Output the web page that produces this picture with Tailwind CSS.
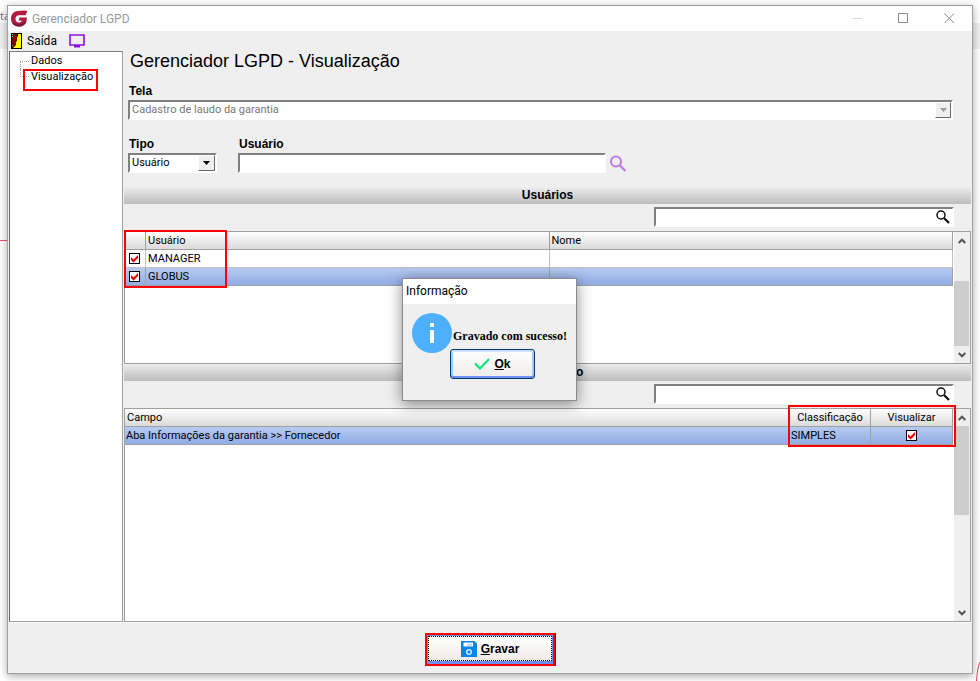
<!DOCTYPE html>
<html lang="pt-BR">
<head>
  <meta charset="UTF-8" />
  <meta name="viewport" content="width=device-width, initial-scale=1.0"/>
  <title>Gerenciador LGPD</title>
  <script src="https://cdn.jsdelivr.net/npm/@tailwindcss/browser@4"></script>
</head>
<body class="relative h-screen min-h-[500px] overflow-hidden bg-white px-[7px] pt-[5px] pb-[7px] font-[Roboto,sans-serif] text-[11px] leading-4 text-black">

  <!-- Page behind the window -->
  <div class="absolute inset-x-0 top-[23px] h-[26px] bg-[#f0f0f0]"></div>
  <span class="absolute top-2 left-0 font-['Open_Sans',sans-serif] text-[11px] text-[#5a6b85]">ta</span>
  <div class="absolute top-[240px] left-0 h-px w-2 bg-[#f0506a]"></div>
  <svg class="absolute right-0 bottom-0 h-5 w-1" viewBox="0 0 4 20" fill="none" stroke="#f0405a"><path d="M4 1Q1 8 0.5 20"/></svg>

  <!-- Window -->
  <div class="relative flex h-full flex-col border border-[#a0a0a0] bg-[#efefef] shadow-[0_2px_8px_rgba(0,0,0,0.35)]">

    <!-- Title bar -->
    <header class="flex h-[25px] shrink-0 items-center bg-white pl-[3px] text-[12px] text-[#999999]">
      <svg class="mr-1 size-[17px]" viewBox="0 0 17 17">
        <path d="M13.5 0.5L6.500 1C2.500 1.500 0 4.600 0 8.600C0 13.500 3.600 16.500 8 16.500C12.500 16.500 15.500 14 16 7.500H8.500L7.500 10.500H10.800C10.300 12 9.300 12.600 8 12.600C5.800 12.600 4.500 11 4.500 8.800C4.500 6.500 6 5.200 8.200 5.200H14.500L16.500 1Z" fill="#b01c43"/>
        <path d="M0.500 11C1.500 14.800 4.500 16.500 8 16.500C12 16.500 14.800 14.500 15.700 10.500C12 15 5 15.500 0.500 11Z" fill="#7d1733"/>
      </svg>
      <h1>Gerenciador LGPD</h1>
      <div class="ml-auto flex h-full">
        <button type="button" aria-label="Minimizar" class="grid w-[46px] place-items-center"><svg class="size-[11px]" viewBox="0 0 11 11" stroke="#dddddd"><path d="M0 5.5H10"/></svg></button>
        <button type="button" aria-label="Maximizar" class="grid w-[46px] place-items-center"><svg class="size-[11px]" viewBox="0 0 11 11" fill="none" stroke="#8a8a8a"><path d="M0.500 0.500H9.500V9.500H0.500Z"/></svg></button>
        <button type="button" aria-label="Fechar" class="grid w-[46px] place-items-center"><svg class="size-[11px]" viewBox="0 0 11 11" stroke="#8a8a8a"><path d="M0.500 0.500L10 10M10 0.500L0.500 10"/></svg></button>
      </div>
    </header>

    <!-- Toolbar -->
    <div class="flex h-5 shrink-0 items-center gap-3 pl-[3px] text-[12px]">
      <button type="button" class="flex items-center gap-[5px]">
        <svg class="h-4 w-[11px]" viewBox="0 0 11 16">
          <path d="M0 0H11V16H0Z" fill="#000"/>
          <path d="M1 1H6V12L1 15Z" fill="#800000"/>
          <path d="M7 1H10V15H2L5 12V9L6 8V4L7 3Z" fill="#ffff00"/>
          <path d="M1 1H2V2H1ZM1 3H2V4H1ZM1 12H2V13H1Z" fill="#00d8e8"/>
        </svg>
        Saída
      </button>
      <button type="button" aria-label="Monitor">
        <svg class="block h-[14px] w-4" viewBox="0 0 16 14"><path d="M1 1H15V11H1Z" fill="none" stroke="#8a10e8" stroke-width="1.600"/><path d="M5 11H11V13.500H5Z" fill="#8a10e8"/></svg>
      </button>
    </div>

    <div class="flex min-h-0 flex-1 pr-px pl-px">
      <!-- Side tree -->
      <nav class="mr-px w-[114px] shrink-0 border border-t-[#808080] border-r-[#a0a0a0] border-b-[#a0a0a0] border-l-[#696969] bg-white pt-px">
        <ul class="ml-[10px]">
          <li class="flex items-center gap-0.5"><span class="mt-2 h-2 w-[9px] border-t border-l border-dotted border-[#a0a0a0]"></span><a href="#">Dados</a></li>
          <li class="relative flex items-center gap-0.5"><span class="mb-2 h-2 w-[9px] border-b border-l border-dotted border-[#a0a0a0]"></span><a href="#">Visualização</a>
            <span class="pointer-events-none absolute top-0 left-[3px] h-[22px] w-[75px] border-2 border-[#ff0000]"></span>
          </li>
        </ul>
      </nav>

      <main class="flex min-w-0 flex-1 flex-col">
        <h2 class="pl-[6px] font-['Liberation_Sans',sans-serif] text-[18px] leading-5">Gerenciador LGPD - Visualização</h2>

        <!-- Filters -->
        <form class="mt-3 pr-[18px] pl-1">
          <label for="tela" class="block h-[17px] pl-px font-['Liberation_Sans',sans-serif] text-[12px] font-bold">Tela</label>
          <div class="relative">
            <select id="tela" disabled class="block h-5 w-full appearance-none border-2 border-t-[#808080] border-r-white border-b-white border-l-[#808080] bg-white px-0.5 text-[#787878] opacity-100">
              <option>Cadastro de laudo da garantia</option>
            </select>
            <span class="pointer-events-none absolute top-0.5 right-0.5 grid h-4 w-4 place-items-center border border-t-white border-r-[#696969] border-b-[#696969] border-l-white bg-[#efefef]"><svg class="h-1 w-[7px]" viewBox="0 0 7 4"><path d="M0 0H7L3.500 4Z" fill="#9a9a9a"/></svg></span>
          </div>
          <div class="mt-4 flex gap-[21px]">
            <div class="w-[89px]">
              <label for="tipo" class="block h-[17px] pl-px font-['Liberation_Sans',sans-serif] text-[12px] font-bold">Tipo</label>
              <div class="relative">
                <select id="tipo" class="block h-5 w-full appearance-none border-2 border-t-[#808080] border-r-white border-b-white border-l-[#808080] bg-white px-0.5">
                  <option>Usuário</option>
                  <option>Grupo</option>
                </select>
                <span class="pointer-events-none absolute top-0.5 right-0.5 grid h-4 w-[17px] place-items-center border border-t-white border-r-[#696969] border-b-[#696969] border-l-white bg-[#efefef]"><svg class="h-1 w-[7px]" viewBox="0 0 7 4"><path d="M0 0H7L3.500 4Z"/></svg></span>
              </div>
            </div>
            <div>
              <label for="usuario" class="block h-[17px] pl-px font-['Liberation_Sans',sans-serif] text-[12px] font-bold">Usuário</label>
              <div class="flex items-center gap-1">
                <input id="usuario" type="text" class="h-5 w-[368px] border-2 border-t-[#808080] border-r-white border-b-white border-l-[#808080] bg-white px-0.5" />
                <button type="button" aria-label="Procurar usuário"><svg class="block size-[17px]" viewBox="0 0 17 17" fill="none" stroke="#c078e8" stroke-width="2"><circle cx="6" cy="6.500" r="5"/><path d="M9.500 10L15.500 16" stroke-width="2.200"/></svg></button>
              </div>
            </div>
          </div>
        </form>

        <!-- Users -->
        <h3 class="mt-[14px] h-[17px] shrink-0 bg-linear-to-b from-[#ececec] to-[#bdbdbd] text-center font-['Liberation_Sans',sans-serif] text-[12px] leading-[17px] font-bold">Usuários</h3>
        <div class="flex h-[27px] shrink-0 justify-end pt-[3px] pr-[17px]">
          <div class="relative">
            <input type="text" aria-label="Buscar em usuários" class="block h-5 w-[300px] border-2 border-t-[#808080] border-r-white border-b-white border-l-[#808080] bg-white pr-6 pl-0.5" />
            <svg class="absolute top-[3px] right-1 size-[14px]" viewBox="0 0 14 14" fill="none" stroke="#111"><circle cx="5" cy="5" r="4" stroke-width="1.500"/><path d="M8 8L13 13" stroke-width="2.200"/></svg>
          </div>
        </div>
        <section class="relative flex h-[133px] shrink-0 border border-[#a0a0a0] bg-white">
          <div class="min-w-0 flex-1">
            <table class="w-full table-fixed border-separate border-spacing-0">
              <colgroup><col class="w-[21px]" /><col /><col /></colgroup>
              <thead>
                <tr class="h-[18px] bg-linear-to-b from-white to-[#d8d8d8] text-left">
                  <th class="border-r border-b border-[#a0a0a0]" aria-label="Selecionar"></th>
                  <th class="border-r border-b border-[#a0a0a0] pl-0.5 font-normal">Usuário</th>
                  <th class="border-r border-b border-[#a0a0a0] pl-0.5 font-normal">Nome</th>
                </tr>
              </thead>
              <tbody>
                <tr class="h-[18px]">
                  <td class="border-r border-b border-[#c0c0c0]">
                    <label class="relative ml-1 block size-[11px]"><input type="checkbox" checked aria-label="MANAGER" class="block size-[11px] appearance-none border border-black bg-white" /><svg class="pointer-events-none absolute top-0 left-0 size-[11px]" viewBox="0 0 11 11"><path d="M2 4L4.500 6.500L9 2V5L4.500 9.500L2 7Z" fill="#ee0000"/></svg></label>
                  </td>
                  <td class="border-r border-b border-[#c0c0c0] pl-0.5">MANAGER</td>
                  <td class="border-r border-b border-[#c0c0c0]"></td>
                </tr>
                <tr class="h-[18px] bg-linear-to-b from-[#b6cbf0] to-[#8faae6]">
                  <td class="border-r border-b border-[#a0a0a0]">
                    <label class="relative ml-1 block size-[11px]"><input type="checkbox" checked aria-label="GLOBUS" class="block size-[11px] appearance-none border border-black bg-white" /><svg class="pointer-events-none absolute top-0 left-0 size-[11px]" viewBox="0 0 11 11"><path d="M2 4L4.500 6.500L9 2V5L4.500 9.500L2 7Z" fill="#ee0000"/></svg></label>
                  </td>
                  <td class="border-r border-b border-[#a0a0a0] pl-0.5">GLOBUS</td>
                  <td class="border-r border-b border-[#a0a0a0]"></td>
                </tr>
              </tbody>
            </table>
          </div>
          <div class="ml-px flex w-4 shrink-0 flex-col bg-[#efefef]">
            <div class="grid h-[18px] shrink-0 place-items-center"><svg class="h-[6px] w-2" viewBox="0 0 8 6" fill="none" stroke="#555" stroke-width="2"><path d="M0.700 5L4 1.700L7.300 5"/></svg></div>
            <div class="mt-auto mr-px h-[65px] bg-[#cdcdcd]"></div>
            <div class="grid h-[17px] shrink-0 place-items-center"><svg class="h-[6px] w-2" viewBox="0 0 8 6" fill="none" stroke="#555" stroke-width="2"><path d="M0.700 1L4 4.300L7.300 1"/></svg></div>
          </div>
          <div class="pointer-events-none absolute -top-0.5 -left-px h-[58px] w-[103px] border-2 border-[#ff0000]"></div>
        </section>

        <!-- Fields -->
        <h3 class="h-[17px] shrink-0 bg-linear-to-b from-[#ececec] to-[#bdbdbd] text-center font-['Liberation_Sans',sans-serif] text-[12px] leading-[17px] font-bold">Visualização</h3>
        <div class="flex h-[27px] shrink-0 justify-end pt-[3px] pr-[17px]">
          <div class="relative">
            <input type="text" aria-label="Buscar em campos" class="block h-5 w-[300px] border-2 border-t-[#808080] border-r-white border-b-white border-l-[#808080] bg-white pr-6 pl-0.5" />
            <svg class="absolute top-[3px] right-1 size-[14px]" viewBox="0 0 14 14" fill="none" stroke="#111"><circle cx="5" cy="5" r="4" stroke-width="1.500"/><path d="M8 8L13 13" stroke-width="2.200"/></svg>
          </div>
        </div>
        <section class="relative flex min-h-0 flex-1 border border-[#a0a0a0] bg-white">
          <div class="min-w-0 flex-1">
            <table class="w-full table-fixed border-separate border-spacing-0">
              <colgroup><col /><col class="w-[81px]" /><col class="w-[82px]" /></colgroup>
              <thead>
                <tr class="h-[18px] bg-linear-to-b from-white to-[#d8d8d8]">
                  <th class="border-r border-b border-[#a0a0a0] pl-0.5 text-left font-normal">Campo</th>
                  <th class="border-r border-b border-[#a0a0a0] font-normal">Classificação</th>
                  <th class="border-r border-b border-[#a0a0a0] font-normal">Visualizar</th>
                </tr>
              </thead>
              <tbody>
                <tr class="h-[18px] bg-linear-to-b from-[#b6cbf0] to-[#8faae6]">
                  <td class="border-r border-b border-[#a0a0a0] pl-px">Aba Informações da garantia &gt;&gt; Fornecedor</td>
                  <td class="border-r border-b border-[#a0a0a0] pl-px">SIMPLES</td>
                  <td class="border-r border-b border-[#a0a0a0]">
                    <label class="relative mx-auto block size-[11px]"><input type="checkbox" checked aria-label="Visualizar Fornecedor" class="block size-[11px] appearance-none border border-black bg-white" /><svg class="pointer-events-none absolute top-0 left-0 size-[11px]" viewBox="0 0 11 11"><path d="M2 4L4.500 6.500L9 2V5L4.500 9.500L2 7Z" fill="#ee0000"/></svg></label>
                  </td>
                </tr>
              </tbody>
            </table>
          </div>
          <div class="ml-px flex w-4 shrink-0 flex-col bg-[#efefef]">
            <div class="grid h-[17px] shrink-0 place-items-center"><svg class="h-[6px] w-2" viewBox="0 0 8 6" fill="none" stroke="#555" stroke-width="2"><path d="M0.700 5L4 1.700L7.300 5"/></svg></div>
            <div class="mr-px h-[89px] bg-[#cdcdcd]"></div>
            <div class="mt-auto grid h-[17px] shrink-0 place-items-center"><svg class="h-[6px] w-2" viewBox="0 0 8 6" fill="none" stroke="#555" stroke-width="2"><path d="M0.700 1L4 4.300L7.300 1"/></svg></div>
          </div>
          <div class="pointer-events-none absolute -top-1 right-[14px] h-[42px] w-[168px] border-2 border-[#ff0000]"></div>
        </section>
      </main>
    </div>

    <!-- Footer -->
    <footer class="flex h-[51px] shrink-0 justify-center border-t border-white pt-[10px]">
      <button type="button" class="h-[33px] w-[130px] border-2 border-[#ff0000] bg-[#6f8cf0] px-px pt-px pb-[3px] font-['Liberation_Sans',sans-serif] text-[12px] font-bold shadow-[1px_0_0_#003c74]">
        <span class="flex h-full items-center justify-center gap-1 border border-dotted border-black bg-linear-to-b from-white to-[#efece8]">
          <svg class="size-4" viewBox="0 0 16 16"><path d="M0 0H13.500L16 2.500V16H0Z" fill="#0a84e8"/><path d="M2.500 1.500H12V5.500H2.500Z" fill="#fff"/><path d="M6 2.500H11V5H6Z" fill="#b8dcfa"/><circle cx="8" cy="11" r="2.300" fill="none" stroke="#cfe8ff" stroke-width="1.500"/></svg>
          <span><u>G</u>ravar</span>
        </span>
      </button>
    </footer>
  </div>

  <!-- Message box -->
  <div role="dialog" aria-labelledby="msg-title" class="absolute top-[278px] left-1/2 -ml-[88px] h-[123px] w-[175px] border border-[#8c8c8c] bg-[#efefef] shadow-[0_3px_14px_rgba(0,0,0,0.45)]">
    <h2 id="msg-title" class="h-[25px] bg-white pl-[3px] text-[12px] leading-[25px]">Informação</h2>
    <div class="flex items-center pt-[9px] pl-[9px]">
      <svg class="size-10 shrink-0" viewBox="0 0 40 40"><circle cx="20" cy="20" r="20" fill="#4db0ff"/><path d="M18 10H22V14H18ZM18 17H22V30H18Z" fill="#fff"/></svg>
      <p class="pt-[6px] pl-px font-['Liberation_Serif',serif] text-[12px] font-bold whitespace-nowrap">Gravado com sucesso!</p>
    </div>
    <button type="button" class="-mt-1 ml-[47px] flex h-[30px] w-[85px] items-center justify-center gap-1 rounded-[3px] border border-[#003c74] bg-linear-to-b from-white to-[#efece8] font-['Liberation_Sans',sans-serif] text-[12px] font-bold shadow-[inset_0_2px_0_#cfe0ff,inset_0_-2px_0_#7090f0,inset_2px_0_0_#b0c4f8,inset_-2px_0_0_#b0c4f8]">
      <svg class="h-3 w-4" viewBox="0 0 16 12" fill="none" stroke="#00e676" stroke-width="2"><path d="M1 5.500L6 10.500L15 1"/></svg>
      <span><u>O</u>k</span>
    </button>
  </div>
</body>
</html>
